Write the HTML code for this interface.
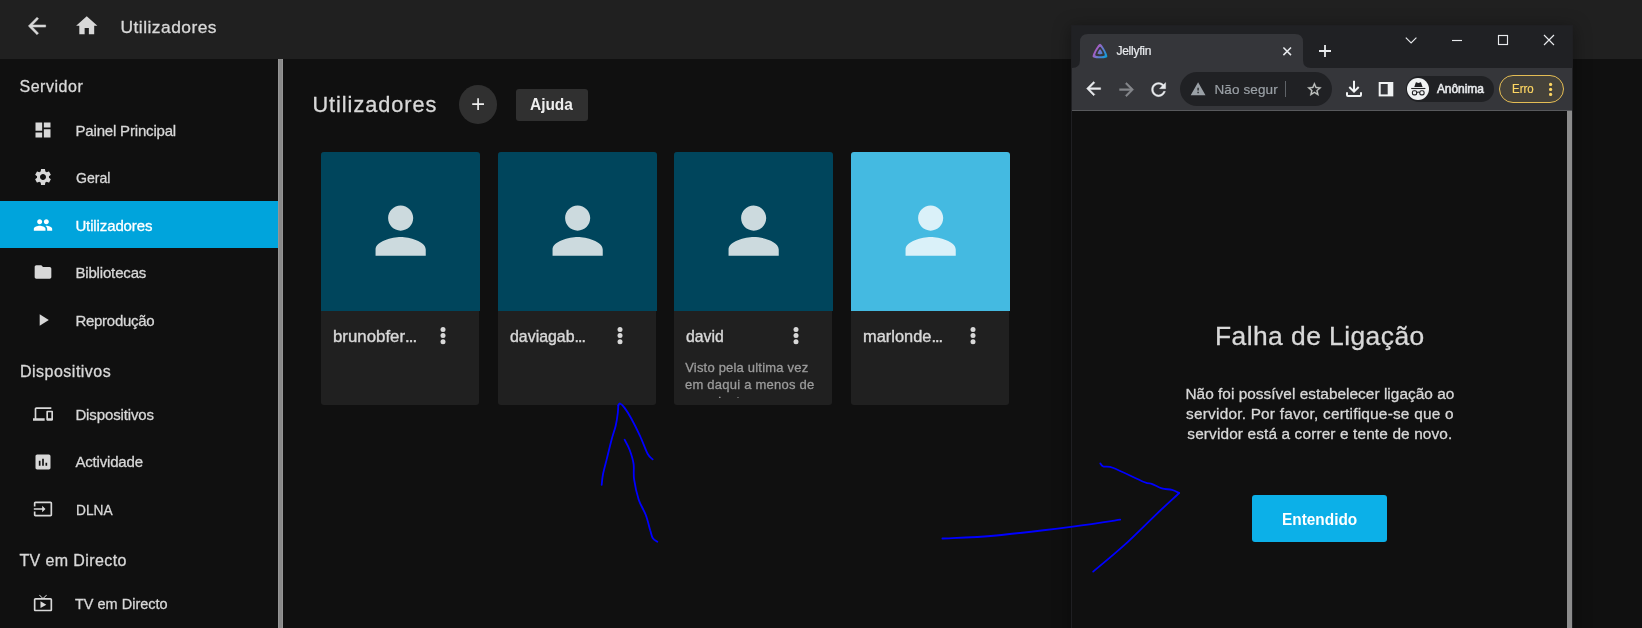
<!DOCTYPE html>
<html lang="pt"><head><meta charset="utf-8"><title>Jellyfin</title>
<style>
html,body{margin:0;padding:0;background:#101010;}
body{width:1642px;height:628px;overflow:hidden;position:relative;font-family:'Liberation Sans',sans-serif;}
#root{position:absolute;left:0;top:0;width:1642px;height:628px;will-change:transform;}
.b{position:absolute;}
.i{position:absolute;display:block;overflow:visible;}
.t{position:absolute;white-space:nowrap;line-height:1;}
</style></head><body>
<div id="root">
<div class="b" style="left:0;top:0;width:1642px;height:59px;background:#202020"></div>
<svg class="i" style="left:24.20px;top:12.50px;width:26px;height:26px;" viewBox="0 0 24 24"><path fill="#d8d8d8" stroke="#d8d8d8" stroke-width="0.45" stroke-linejoin="round" d="M20 11H7.83l5.59-5.59L12 4l-8 8 8 8 1.41-1.41L7.83 13H20v-2z"/></svg>
<svg class="i" style="left:74.25px;top:12.65px;width:25.5px;height:25.5px;" viewBox="0 0 24 24"><path fill="#d8d8d8" d="M10 20v-6h4v6h5v-8h3L12 3 2 12h3v8z"/></svg>
<div class="t" style="top:17px;line-height:20px;font-size:17.4px;color:#d8d8d8;letter-spacing:0.47px;-webkit-text-stroke:0.3px #d8d8d8;left:120.50px;">Utilizadores</div>
<div class="b" style="left:0;top:201px;width:278px;height:47px;background:#00a4dc"></div>
<div class="b" style="left:278px;top:59px;width:5px;height:569px;background:#898989;box-sizing:border-box;border:solid #959595;border-width:0 1px"></div>
<div class="t" style="top:78px;line-height:17px;font-size:16px;color:#d8d8d8;letter-spacing:0.52px;-webkit-text-stroke:0.3px #d8d8d8;left:19.50px;">Servidor</div>
<div class="t" style="top:363px;line-height:17px;font-size:16px;color:#d8d8d8;letter-spacing:0.49px;-webkit-text-stroke:0.3px #d8d8d8;left:20.00px;">Dispositivos</div>
<div class="t" style="top:552px;line-height:17px;font-size:16px;color:#d8d8d8;letter-spacing:0.4px;-webkit-text-stroke:0.3px #d8d8d8;left:19.40px;">TV em Directo</div>
<svg class="i" style="left:33.00px;top:119.50px;width:20px;height:20px;" viewBox="0 0 24 24"><path fill="#d8d8d8" d="M3 13h8V3H3v10zm0 8h8v-6H3v6zm10 0h8V11h-8v10zm0-18v6h8V3h-8z"/></svg>
<div class="t" style="top:122px;line-height:17px;font-size:15px;color:#d8d8d8;letter-spacing:-0.18px;-webkit-text-stroke:0.3px #d8d8d8;left:75.50px;">Painel Principal</div>
<svg class="i" style="left:33.00px;top:166.90px;width:20px;height:20px;" viewBox="0 0 24 24"><path fill="#d8d8d8" d="M19.14 12.94c.04-.3.06-.61.06-.94 0-.32-.02-.64-.07-.94l2.03-1.58c.18-.14.23-.41.12-.61l-1.92-3.32c-.12-.22-.37-.29-.59-.22l-2.39.96c-.5-.38-1.03-.7-1.62-.94l-.36-2.54c-.04-.24-.24-.41-.48-.41h-3.84c-.24 0-.43.17-.47.41l-.36 2.54c-.59.24-1.13.57-1.62.94l-2.39-.96c-.22-.08-.47 0-.59.22L2.74 8.87c-.12.21-.08.47.12.61l2.03 1.58c-.05.3-.09.63-.09.94s.02.64.07.94l-2.03 1.58c-.18.14-.23.41-.12.61l1.92 3.32c.12.22.37.29.59.22l2.39-.96c.5.38 1.03.7 1.62.94l.36 2.54c.05.24.24.41.48.41h3.84c.24 0 .44-.17.47-.41l.36-2.54c.59-.24 1.13-.56 1.62-.94l2.39.96c.22.08.47 0 .59-.22l1.92-3.32c.12-.22.07-.47-.12-.61l-2.01-1.58zM12 15.6c-1.98 0-3.6-1.62-3.6-3.6s1.62-3.6 3.6-3.6 3.6 1.62 3.6 3.6-1.62 3.6-3.6 3.6z"/></svg>
<div class="t" style="top:169px;line-height:17px;font-size:15px;color:#d8d8d8;-webkit-text-stroke:0.3px #d8d8d8;left:76.10px;transform:scaleX(0.94);transform-origin:0 0;">Geral</div>
<svg class="i" style="left:33.00px;top:214.75px;width:20px;height:20px;" viewBox="0 0 24 24"><path fill="#ffffff" d="M16 11c1.66 0 2.99-1.34 2.99-3S17.66 5 16 5c-1.66 0-3 1.34-3 3s1.34 3 3 3zm-8 0c1.66 0 2.99-1.34 2.99-3S9.66 5 8 5C6.34 5 5 6.34 5 8s1.34 3 3 3zm0 2c-2.33 0-7 1.17-7 3.5V19h14v-2.5c0-2.33-4.67-3.5-7-3.5zm8 0c-.29 0-.62.02-.97.05 1.16.84 1.97 1.97 1.97 3.45V19h6v-2.5c0-2.33-4.67-3.5-7-3.5z"/></svg>
<div class="t" style="top:217px;line-height:17px;font-size:15px;color:#ffffff;letter-spacing:-0.12px;-webkit-text-stroke:0.3px #ffffff;left:75.40px;">Utilizadores</div>
<svg class="i" style="left:33.00px;top:261.60px;width:20px;height:20px;" viewBox="0 0 24 24"><path fill="#d8d8d8" d="M10 4H4c-1.1 0-1.99.9-1.99 2L2 18c0 1.1.9 2 2 2h16c1.1 0 2-.9 2-2V8c0-1.1-.9-2-2-2h-8l-2-2z"/></svg>
<div class="t" style="top:264px;line-height:17px;font-size:15px;color:#d8d8d8;letter-spacing:-0.16px;-webkit-text-stroke:0.3px #d8d8d8;left:75.40px;">Bibliotecas</div>
<svg class="i" style="left:33.00px;top:310.00px;width:20px;height:20px;" viewBox="0 0 24 24"><path fill="#d8d8d8" d="M8 5v14l11-7z"/></svg>
<div class="t" style="top:312px;line-height:17px;font-size:15px;color:#d8d8d8;letter-spacing:-0.27px;-webkit-text-stroke:0.3px #d8d8d8;left:75.40px;">Reprodução</div>
<svg class="i" style="left:33.00px;top:403.60px;width:20px;height:20px;" viewBox="0 0 24 24"><path fill="#d8d8d8" d="M4 6h18V4H4c-1.1 0-2 .9-2 2v11H0v3h14v-3H4V6zm19 2h-6c-.55 0-1 .45-1 1v10c0 .55.45 1 1 1h6c.55 0 1-.45 1-1V9c0-.55-.45-1-1-1zm-1 9h-4v-7h4v7z"/></svg>
<div class="t" style="top:406px;line-height:17px;font-size:15px;color:#d8d8d8;letter-spacing:-0.12px;-webkit-text-stroke:0.3px #d8d8d8;left:75.40px;">Dispositivos</div>
<svg class="i" style="left:33.00px;top:451.60px;width:20px;height:20px;" viewBox="0 0 24 24"><path fill="#d8d8d8" d="M19 3H5c-1.1 0-2 .9-2 2v14c0 1.1.9 2 2 2h14c1.1 0 2-.9 2-2V5c0-1.1-.9-2-2-2zM9 16.5H7v-6h2v6zm4 0h-2v-8.5h2v8.5zm4 0h-2v-3.5h2v3.5z"/></svg>
<div class="t" style="top:453px;line-height:17px;font-size:15px;color:#d8d8d8;letter-spacing:-0.18px;-webkit-text-stroke:0.3px #d8d8d8;left:75.40px;">Actividade</div>
<svg class="i" style="left:33.00px;top:498.75px;width:20px;height:20px;" viewBox="0 0 24 24"><path fill="#d8d8d8" d="M21 3.01H3c-1.1 0-2 .9-2 2V9h2V4.99h18v14.03H3V15H1v4.01c0 1.1.9 1.98 2 1.98h18c1.1 0 2-.88 2-1.98v-14c0-1.11-.9-2-2-2zM11 16l4-4-4-4v3H1v2h10v3z"/></svg>
<div class="t" style="top:501px;line-height:17px;font-size:15px;color:#d8d8d8;-webkit-text-stroke:0.3px #d8d8d8;left:75.50px;transform:scaleX(0.915);transform-origin:0 0;">DLNA</div>
<svg class="i" style="left:33.00px;top:592.60px;width:20px;height:20px;" viewBox="0 0 24 24"><path fill="#d8d8d8" d="M21 6h-7.59l3.29-3.29L16 2l-4 4-4-4-.71.71L10.59 6H3c-1.1 0-2 .89-2 2v12c0 1.1.9 2 2 2h18c1.1 0 2-.9 2-2V8c0-1.11-.9-2-2-2zm0 14H3V8h18v12zM9 10v8l7-4z"/></svg>
<div class="t" style="top:595px;line-height:17px;font-size:15px;color:#d8d8d8;-webkit-text-stroke:0.3px #d8d8d8;left:75.00px;transform:scaleX(0.966);transform-origin:0 0;">TV em Directo</div>
<div class="t" style="top:92px;line-height:25px;font-size:21.7px;color:#d8d8d8;letter-spacing:0.95px;-webkit-text-stroke:0.3px #d8d8d8;left:312.50px;">Utilizadores</div>
<div class="b" style="left:459px;top:85px;width:38.2px;height:38.8px;border-radius:50%;background:#303030"></div>
<svg class="i" style="left:468.00px;top:94.20px;width:20.2px;height:20.2px;" viewBox="0 0 24 24"><path fill="#eeeeee" d="M19 13h-6v6h-2v-6H5v-2h6V5h2v6h6v2z"/></svg>
<div class="b" style="left:516px;top:89px;width:72px;height:32px;border-radius:3px;background:#303030"></div>
<div class="t" style="top:96px;line-height:17px;font-size:16px;color:#eeeeee;font-weight:700;left:530.30px;transform:scaleX(0.965);transform-origin:0 0;">Ajuda</div>
<div class="b" style="left:321px;top:152px;width:158px;height:252.5px;border-radius:3px;background:#202020"></div>
<div class="b" style="left:321px;top:152px;width:159px;height:159px;border-radius:3px 3px 0 0;background:#00455c"></div>
<svg class="i" style="left:362.75px;top:193.25px;width:75.3px;height:75.3px;" viewBox="0 0 24 24"><path fill="#ccdade" d="M12 12c2.21 0 4-1.79 4-4s-1.79-4-4-4-4 1.79-4 4 1.79 4 4 4zm0 2c-2.67 0-8 1.34-8 4v2h16v-2c0-2.66-5.33-4-8-4z"/></svg>
<div class="t" style="top:327px;line-height:19px;font-size:17px;color:#d8d8d8;-webkit-text-stroke:0.4px #d8d8d8;left:333.10px;transform:scaleX(0.99);transform-origin:0 0;">brunobfer<span style="letter-spacing:-1px">...</span></div>
<svg class="i" style="left:437.60px;top:325px;width:10px;height:22px" viewBox="0 0 10 22"><circle cx="5" cy="4.55" r="2.5" fill="#d8d8d8"/><circle cx="5" cy="10.6" r="2.5" fill="#d8d8d8"/><circle cx="5" cy="16.65" r="2.5" fill="#d8d8d8"/></svg>
<div class="b" style="left:498px;top:152px;width:158px;height:252.5px;border-radius:3px;background:#202020"></div>
<div class="b" style="left:498px;top:152px;width:159px;height:159px;border-radius:3px 3px 0 0;background:#00455c"></div>
<svg class="i" style="left:539.75px;top:193.25px;width:75.3px;height:75.3px;" viewBox="0 0 24 24"><path fill="#ccdade" d="M12 12c2.21 0 4-1.79 4-4s-1.79-4-4-4-4 1.79-4 4 1.79 4 4 4zm0 2c-2.67 0-8 1.34-8 4v2h16v-2c0-2.66-5.33-4-8-4z"/></svg>
<div class="t" style="top:327px;line-height:19px;font-size:17px;color:#d8d8d8;-webkit-text-stroke:0.4px #d8d8d8;left:510.10px;transform:scaleX(0.935);transform-origin:0 0;">daviagab<span style="letter-spacing:-1px">...</span></div>
<svg class="i" style="left:614.60px;top:325px;width:10px;height:22px" viewBox="0 0 10 22"><circle cx="5" cy="4.55" r="2.5" fill="#d8d8d8"/><circle cx="5" cy="10.6" r="2.5" fill="#d8d8d8"/><circle cx="5" cy="16.65" r="2.5" fill="#d8d8d8"/></svg>
<div class="b" style="left:674.4px;top:152px;width:158px;height:252.5px;border-radius:3px;background:#202020"></div>
<div class="b" style="left:674.4px;top:152px;width:159px;height:159px;border-radius:3px 3px 0 0;background:#00455c"></div>
<svg class="i" style="left:716.15px;top:193.25px;width:75.3px;height:75.3px;" viewBox="0 0 24 24"><path fill="#ccdade" d="M12 12c2.21 0 4-1.79 4-4s-1.79-4-4-4-4 1.79-4 4 1.79 4 4 4zm0 2c-2.67 0-8 1.34-8 4v2h16v-2c0-2.66-5.33-4-8-4z"/></svg>
<div class="t" style="top:327px;line-height:19px;font-size:17px;color:#d8d8d8;-webkit-text-stroke:0.4px #d8d8d8;left:685.80px;transform:scaleX(0.93);transform-origin:0 0;">david</div>
<svg class="i" style="left:791.00px;top:325px;width:10px;height:22px" viewBox="0 0 10 22"><circle cx="5" cy="4.55" r="2.5" fill="#d8d8d8"/><circle cx="5" cy="10.6" r="2.5" fill="#d8d8d8"/><circle cx="5" cy="16.65" r="2.5" fill="#d8d8d8"/></svg>
<div class="b" style="left:851px;top:152px;width:158px;height:252.5px;border-radius:3px;background:#202020"></div>
<div class="b" style="left:851px;top:152px;width:159px;height:159px;border-radius:3px 3px 0 0;background:#44bae1"></div>
<svg class="i" style="left:892.75px;top:193.25px;width:75.3px;height:75.3px;" viewBox="0 0 24 24"><path fill="#daf1f9" d="M12 12c2.21 0 4-1.79 4-4s-1.79-4-4-4-4 1.79-4 4 1.79 4 4 4zm0 2c-2.67 0-8 1.34-8 4v2h16v-2c0-2.66-5.33-4-8-4z"/></svg>
<div class="t" style="top:327px;line-height:19px;font-size:17px;color:#d8d8d8;-webkit-text-stroke:0.4px #d8d8d8;left:863.10px;transform:scaleX(0.965);transform-origin:0 0;">marlonde<span style="letter-spacing:-1px">...</span></div>
<svg class="i" style="left:967.60px;top:325px;width:10px;height:22px" viewBox="0 0 10 22"><circle cx="5" cy="4.55" r="2.5" fill="#d8d8d8"/><circle cx="5" cy="10.6" r="2.5" fill="#d8d8d8"/><circle cx="5" cy="16.65" r="2.5" fill="#d8d8d8"/></svg>
<div class="b" style="left:684px;top:355px;width:140px;height:42.5px;overflow:hidden"><div class="t" style="top:5px;line-height:15px;font-size:13px;color:#9b9b9b;letter-spacing:0.2px;-webkit-text-stroke:0.3px #9b9b9b;left:1.20px;">Visto pela ultima vez</div><div class="t" style="top:22px;line-height:15px;font-size:13px;color:#9b9b9b;letter-spacing:0.23px;-webkit-text-stroke:0.3px #9b9b9b;left:1.00px;">em daqui a menos de</div><div class="t" style="top:39px;line-height:15px;font-size:13px;color:#9b9b9b;letter-spacing:0.2px;-webkit-text-stroke:0.3px #9b9b9b;left:1.00px;">um minuto</div></div>
<div class="b" style="left:1071px;top:25px;width:502px;height:640px;background:#1f1f22;box-shadow:0 3px 16px 1px rgba(0,0,0,.36)"></div>
<div class="b" style="left:1072px;top:26px;width:500px;height:42px;background:#202124"></div>
<div class="b" style="left:1072px;top:68px;width:500px;height:42px;background:#35363a"></div>
<div class="b" style="left:1072px;top:110px;width:500px;height:1px;background:#58595c"></div>
<div class="b" style="left:1180px;top:72px;width:152px;height:34px;border-radius:17px;background:#202124"></div>
<svg class="i" style="left:1072px;top:34px;width:240px;height:34px" viewBox="1072 34 240 34"><path fill="#35363a" d="M1072 68 Q1080 68 1080 60 L1080 42 Q1080 34 1088 34 L1295 34 Q1303 34 1303 42 L1303 60 Q1303 68 1311 68 Z"/></svg>
<svg class="i" style="left:1091.9px;top:42.8px;width:16.1px;height:16.1px" viewBox="0 0 512 512"><defs><linearGradient id="jf" gradientUnits="userSpaceOnUse" x1="110.25" y1="213.3" x2="496.14" y2="436.09"><stop offset="0" stop-color="#aa5cc3"/><stop offset="1" stop-color="#00a4dc"/></linearGradient></defs><path fill="url(#jf)" d="M256 201.6c-20.4 0-86.2 119.3-76.2 139.4s142.5 19.9 152.4 0S276.5 201.6 256 201.6z"/><path fill="url(#jf)" d="M256 23.3c-61.6 0-259.8 359.4-229.6 420.1s429.3 60 459.2 0S317.6 23.3 256 23.3zm150.5 367.5c-19.6 39.3-281.1 39.8-300.9 0S215.7 115.5 256 115.5s170.1 235.9 150.5 275.3z"/></svg>
<div class="t" style="top:44px;line-height:14px;font-size:12px;color:#e8eaed;letter-spacing:-0.24px;-webkit-text-stroke:0.2px #e8eaed;left:1116.40px;">Jellyfin</div>
<svg class="i" style="left:1072px;top:25px;width:501px;height:90px" viewBox="1072 25 501 90" fill="none" stroke-linecap="butt"><path stroke="#e8eaed" stroke-width="1.5" d="M1283.4 47.5l7.6 7.6M1291 47.5l-7.6 7.6"/><path stroke="#e8eaed" stroke-width="1.8" d="M1319 51h12M1325 45v12"/><path stroke="#e8eaed" stroke-width="1.15" d="M1405.8 37.6l5.3 5.3l5.3-5.3"/><path stroke="#e8eaed" stroke-width="1.15" d="M1452 40.5h10"/><rect stroke="#e8eaed" stroke-width="1.15" x="1498.5" y="35.5" width="9" height="9"/><path stroke="#e8eaed" stroke-width="1.15" d="M1544 35l10 10M1554 35l-10 10"/><path stroke="#5f6368" stroke-width="1" d="M1285.5 81v16"/><path stroke="#f1f3f4" stroke-width="2" d="M1354 80.8v10.7M1349.3 87l4.7 4.7l4.7-4.7"/><path stroke="#f1f3f4" stroke-width="2" stroke-linejoin="round" d="M1347 92.3v2.6q0 1 1 1h12q1 0 1-1v-2.6"/><rect stroke="#f1f3f4" stroke-width="2" x="1379.7" y="83" width="12.6" height="12.4"/><rect fill="#f1f3f4" x="1387.7" y="83" width="4.6" height="12.4"/></svg>
<svg class="i" style="left:1083.40px;top:78.40px;width:21.2px;height:21.2px;" viewBox="0 0 24 24"><path fill="#e8eaed" stroke="#e8eaed" stroke-width="0.5" stroke-linejoin="round" d="M20 11H7.83l5.59-5.59L12 4l-8 8 8 8 1.41-1.41L7.83 13H20v-2z"/></svg>
<svg class="i" style="left:1115.60px;top:78.60px;width:21.2px;height:21.2px;" viewBox="0 0 24 24"><path fill="#85878b" stroke="#85878b" stroke-width="0.5" stroke-linejoin="round" d="M12 4l-1.41 1.41L16.17 11H4v2h12.17l-5.58 5.59L12 20l8-8z"/></svg>
<svg class="i" style="left:1147.60px;top:78.60px;width:21.2px;height:21.2px;" viewBox="0 0 24 24"><path fill="#e8eaed" stroke="#e8eaed" stroke-width="0.4" stroke-linejoin="round" d="M17.65 6.35C16.2 4.9 14.21 4 12 4c-4.42 0-7.99 3.58-7.99 8s3.57 8 7.99 8c3.73 0 6.84-2.55 7.73-6h-2.08c-.82 2.33-3.04 4-5.65 4-3.31 0-6-2.69-6-6s2.69-6 6-6c1.66 0 3.14.69 4.22 1.78L13 11h7V4l-2.35 2.35z"/></svg>
<svg class="i" style="left:1189.90px;top:81.00px;width:16.2px;height:16.2px;" viewBox="0 0 24 24"><path fill="#9aa0a6" d="M1 21h22L12 2 1 21zm12-3h-2v-2h2v2zm0-4h-2v-4h2v4z"/></svg>
<div class="t" style="top:82px;line-height:15px;font-size:13.5px;color:#9aa0a6;letter-spacing:0.12px;-webkit-text-stroke:0.2px #9aa0a6;left:1214.50px;">Não segur</div>
<svg class="i" style="left:1306.10px;top:80.90px;width:16.8px;height:16.8px;" viewBox="0 0 24 24"><path fill="#c4c7c5" stroke="#c4c7c5" stroke-width="0.45" stroke-linejoin="round" d="M22 9.24l-7.19-.62L12 2 9.19 8.63 2 9.24l5.46 4.73L5.82 21 12 17.27 18.18 21l-1.63-7.03L22 9.24zM12 15.4l-3.76 2.27 1-4.28-3.32-2.88 4.38-.38L12 6.1l1.71 4.04 4.38.38-3.32 2.88 1 4.28L12 15.4z"/></svg>
<div class="b" style="left:1405.8px;top:76px;width:87.8px;height:26px;border-radius:13px;background:#202124"></div>
<div class="b" style="left:1406.8px;top:77.7px;width:22.3px;height:22.3px;border-radius:50%;background:#f1f3f4"></div>
<svg class="i" style="left:1406.8px;top:77.7px;width:22.3px;height:22.3px" viewBox="1406.8 77.7 22.3 22.3"><path fill="#202124" d="M1414.1 86.8l1.4-4.3c.2-.5.6-.6 1-.4l1.7.6l1.7-.6c.4-.2.8-.1 1 .4l1.5 4.3z"/><path stroke="#202124" stroke-width="1.1" d="M1411 88.2h14.2"/><rect x="1412.2" y="90.5" width="4.3" height="4.1" rx="1.6" fill="none" stroke="#202124" stroke-width="1.15"/><rect x="1419.6" y="90.5" width="4.3" height="4.1" rx="1.6" fill="none" stroke="#202124" stroke-width="1.15"/><path stroke="#202124" stroke-width="1.1" fill="none" d="M1416.5 92.1q1.55-.7 3.1 0"/></svg>
<div class="t" style="top:82px;line-height:14px;font-size:12px;color:#e8eaed;letter-spacing:-0.05px;-webkit-text-stroke:0.55px #e8eaed;left:1436.90px;">Anônima</div>
<div class="b" style="left:1499.2px;top:74.9px;width:64.8px;height:28.1px;border-radius:14px;background:#45423a;border:1px solid #e4bd55;box-sizing:border-box"></div>
<div class="t" style="top:82px;line-height:14px;font-size:12px;color:#fdd663;-webkit-text-stroke:0.2px #fdd663;left:1512.30px;transform:scaleX(0.955);transform-origin:0 0;">Erro</div>
<svg class="i" style="left:1545px;top:80px;width:12px;height:20px" viewBox="1545 80 12 20"><circle cx="1550.6" cy="84.45" r="1.6" fill="#fdd663"/><circle cx="1550.6" cy="89.45" r="1.6" fill="#fdd663"/><circle cx="1550.6" cy="94.45" r="1.6" fill="#fdd663"/></svg>
<div class="b" style="left:1072px;top:111px;width:495px;height:520px;background:#101010"></div>
<div class="b" style="left:1567px;top:111px;width:5px;height:520px;background:#8c8c8c"></div>
<div class="t" style="top:321px;line-height:30px;font-size:26.4px;color:#d8d8d8;letter-spacing:0.45px;-webkit-text-stroke:0.3px #d8d8d8;left:1319.80px;transform:translateX(-50%);">Falha de Ligação</div>
<div class="t" style="top:385px;line-height:17px;font-size:15.4px;color:#d8d8d8;letter-spacing:0.03px;-webkit-text-stroke:0.3px #d8d8d8;left:1319.90px;transform:translateX(-50%);">Não foi possível estabelecer ligação ao</div>
<div class="t" style="top:405px;line-height:17px;font-size:15.4px;color:#d8d8d8;letter-spacing:0.21px;-webkit-text-stroke:0.3px #d8d8d8;left:1319.90px;transform:translateX(-50%);">servidor. Por favor, certifique-se que o</div>
<div class="t" style="top:425px;line-height:17px;font-size:15.4px;color:#d8d8d8;letter-spacing:0.13px;-webkit-text-stroke:0.3px #d8d8d8;left:1319.90px;transform:translateX(-50%);">servidor está a correr e tente de novo.</div>
<div class="b" style="left:1252px;top:494.6px;width:135px;height:47.5px;border-radius:3px;background:#0cb0e8"></div>
<div class="t" style="top:511px;line-height:17px;font-size:16px;color:#ffffff;font-weight:700;left:1282.00px;transform:scaleX(0.962);transform-origin:0 0;">Entendido</div>
<svg class="i" style="left:0;top:0;width:1642px;height:628px;z-index:50" viewBox="0 0 1642 628" fill="none" stroke="#0000ff" stroke-width="1.8" stroke-linecap="round" stroke-linejoin="round"><path d="M601.7 484.9 C601.9 483.1 602.1 478.5 603.0 474.2 C603.9 469.9 605.3 464.8 606.8 458.9 C608.3 452.9 610.4 444.0 611.9 438.5 C613.4 433.0 614.7 429.9 615.7 425.7 C616.7 421.4 617.4 416.4 617.8 413.0 C618.2 409.6 618.2 406.6 618.3 405.3"/><path d="M618.3 405.3 C618.6 405.0 619.0 403.1 620.0 403.5 C621.0 403.9 622.8 405.5 624.6 407.9 C626.4 410.3 628.4 413.3 631.0 418.0 C633.6 422.7 637.2 429.9 640.0 435.9 C642.8 441.9 645.5 449.9 647.6 453.8 C649.7 457.7 651.9 458.5 652.7 459.4"/><path d="M624.6 439.7 C625.5 441.4 628.2 445.9 629.7 450.0 C631.2 454.1 632.9 459.1 633.6 464.0 C634.3 468.9 633.2 473.4 634.1 479.3 C635.0 485.2 636.8 493.8 638.7 499.7 C640.7 505.6 643.9 509.9 645.8 515.0 C647.7 520.1 649.1 526.5 650.2 530.3 C651.4 534.1 651.5 536.1 652.7 538.0 C653.9 539.9 656.5 541.2 657.3 541.8"/><path d="M942.4 538.5 C951.4 538.0 974.7 537.5 996.4 535.5 C1018.1 533.5 1052.2 529.2 1072.8 526.6 C1093.4 524.0 1112.3 520.9 1120.2 519.7"/><path d="M1100.3 463.4 C1100.8 463.9 1101.1 465.7 1103.3 466.5 C1105.5 467.3 1106.7 465.4 1113.5 468.0 C1120.3 470.6 1137.6 479.4 1144.0 482.0 C1150.4 484.6 1148.7 482.7 1151.7 483.8 C1154.7 484.9 1158.5 487.4 1161.9 488.4 C1165.3 489.4 1169.1 489.1 1172.0 489.9 C1174.9 490.7 1178.0 492.5 1179.2 493.0"/><path d="M1179.2 493.0 C1175.5 496.5 1166.0 505.0 1156.8 513.8 C1147.5 522.6 1134.3 536.1 1123.7 545.7 C1113.1 555.3 1098.3 567.3 1093.2 571.6"/></svg>
</div>
</body></html>
